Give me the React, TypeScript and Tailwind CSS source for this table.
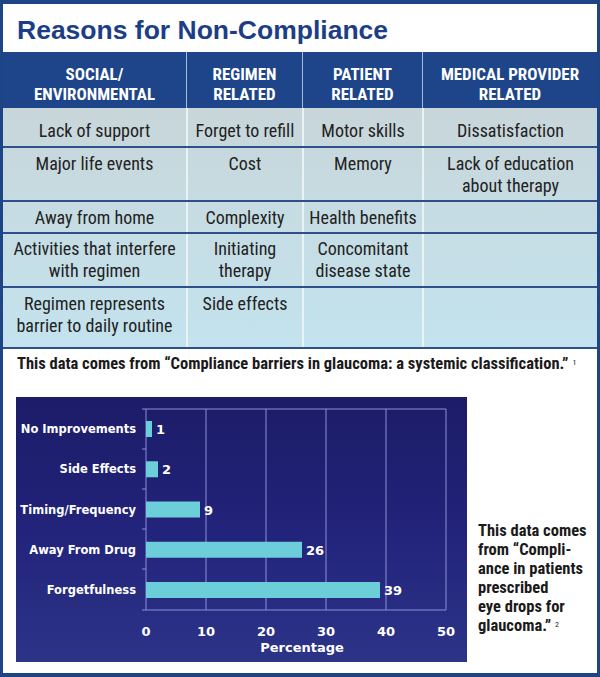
const narrow = { fontFamily: '"Liberation Sans Narrow", "Roboto Condensed", "DejaVu Sans Condensed", Roboto, sans-serif' }

const headers = [
  ["SOCIAL/", "ENVIRONMENTAL"],
  ["REGIMEN", "RELATED"],
  ["PATIENT", "RELATED"],
  ["MEDICAL PROVIDER", "RELATED"],
]

const rows: { h: string; pt: string; cells: string[][] }[] = [
  { h: "h-[38px]", pt: "pt-[12px]", cells: [["Lack of support"], ["Forget to refill"], ["Motor skills"], ["Dissatisfaction"]] },
  { h: "h-[54px]", pt: "pt-[5px]", cells: [["Major life events"], ["Cost"], ["Memory"], ["Lack of education", "about therapy"]] },
  { h: "h-[32px]", pt: "pt-[5px]", cells: [["Away from home"], ["Complexity"], ["Health benefits"], []] },
  { h: "h-[54px]", pt: "pt-[4px]", cells: [["Activities that interfere", "with regimen"], ["Initiating", "therapy"], ["Concomitant", "disease state"], []] },
  { h: "h-[61px]", pt: "pt-[5px]", cells: [["Regimen represents", "barrier to daily routine"], ["Side effects"], [], []] },
]

const cols = "grid grid-cols-[183px_116px_120px_175px]"

const bars = [
  { label: "No Improvements", value: 1 },
  { label: "Side Effects", value: 2 },
  { label: "Timing/Frequency", value: 9 },
  { label: "Away From Drug", value: 26 },
  { label: "Forgetfulness", value: 39 },
]

function Chart() {
  const x0 = 130
  const unit = 6
  const top = 12
  const bottom = 213
  return (
    <div className="w-[451px] h-[265px] bg-gradient-to-b from-[#1c1c68] via-[#22237a] to-[#2c3488]">
      <svg width="451" height="265" style={{ fontFamily: '"DejaVu Sans", Verdana, sans-serif' }}>
        {[0, 10, 20, 30, 40, 50].map((t) => (
          <line key={t} x1={x0 + t * unit} x2={x0 + t * unit} y1={top} y2={bottom} stroke="#8c8fd6" strokeWidth="1" />
        ))}
        <line x1={126} x2={x0 + 300} y1={top} y2={top} stroke="#8c8fd6" strokeWidth="1" />
        <line x1={126} x2={x0 + 300} y1={bottom} y2={bottom} stroke="#8c8fd6" strokeWidth="1" />
        {[52, 92, 132, 172].map((y) => (
          <line key={y} x1={126} x2={x0} y1={y} y2={y} stroke="#8c8fd6" strokeWidth="1" />
        ))}
        {bars.map((b, i) => {
          const cy = 32 + i * 40.25
          const w = b.value * unit
          return (
            <g key={b.label}>
              <text x={120} y={cy + 4} textAnchor="end" fill="#ffffff" fontSize="11.5" fontWeight="bold">
                {b.label}
              </text>
              <rect x={x0} y={cy - 8} width={w} height={16} fill="#6cced9" />
              <text x={x0 + w + 4} y={cy + 5} fill="#ffffff" fontSize="13" fontWeight="bold">
                {b.value}
              </text>
            </g>
          )
        })}
        {[0, 10, 20, 30, 40, 50].map((t) => (
          <text key={t} x={x0 + t * unit} y={239} textAnchor="middle" fill="#ffffff" fontSize="13" fontWeight="bold">
            {t}
          </text>
        ))}
        <text x={286} y={255} textAnchor="middle" fill="#ffffff" fontSize="13" fontWeight="bold">
          Percentage
        </text>
      </svg>
    </div>
  )
}

export default function App() {
  return (
    <main className="w-[600px] h-[677px] bg-[#1d4487] pt-[4px] px-[3px] pb-[4px]">
      <div className="h-full bg-white flex flex-col">
        <header className="h-[48px] flex items-center px-[14px] pt-[4px]">
          <h1
            className="text-[26.5px] font-bold text-[#1c3e86] leading-none"
            style={{ fontFamily: '"Liberation Sans", Arial, sans-serif' }}
          >
            Reasons for Non-Compliance
          </h1>
        </header>

        <section style={narrow}>
          <div className={`${cols} h-[56px] bg-[#1e4589] text-white font-bold text-[17px] leading-[20px]`}>
            {headers.map((h, i) => (
              <div
                key={i}
                className={`flex flex-col items-center justify-center pt-[8px] ${i > 0 ? "border-l border-[#a9bad6]" : ""}`}
              >
                {h.map((l) => (
                  <span key={l}>{l}</span>
                ))}
              </div>
            ))}
          </div>
          <div className="bg-gradient-to-b from-[#c8d6da] to-[#c3e3ee] text-[#222222] text-[18px] leading-[22px]">
            {rows.map((r, ri) => (
              <div key={ri} className={`${cols} ${r.h} ${ri > 0 ? "border-t-2 border-[#2d4f8a]" : ""}`}>
                {r.cells.map((c, ci) => (
                  <div
                    key={ci}
                    className={`flex flex-col items-center text-center ${r.pt} ${ci > 0 ? "border-l-2 border-[#e9f2f5]" : ""}`}
                  >
                    {c.map((l) => (
                      <span key={l}>{l}</span>
                    ))}
                  </div>
                ))}
              </div>
            ))}
          </div>
          <div className="h-[2px] bg-[#2d4f8a]" />
        </section>

        <p className="pl-[14px] pt-[5px] text-[16.5px] font-bold text-[#1a1a1a] leading-[20px]" style={narrow}>
          This data comes from “Compliance barriers in glaucoma: a systemic classification.”
          <sup className="text-[8px] font-normal ml-[4px]">1</sup>
        </p>

        <div className="flex items-end gap-[11px] pl-[13px] pt-[23px]">
          <Chart />
          <p className="pb-[27px] text-[16.5px] font-bold text-[#1a1a1a] leading-[19px]" style={narrow}>
            This data comes
            <br />
            from “Compli-
            <br />
            ance in patients
            <br />
            prescribed
            <br />
            eye drops for
            <br />
            glaucoma.”<sup className="text-[8px] font-normal ml-[4px]">2</sup>
          </p>
        </div>
      </div>
    </main>
  )
}
